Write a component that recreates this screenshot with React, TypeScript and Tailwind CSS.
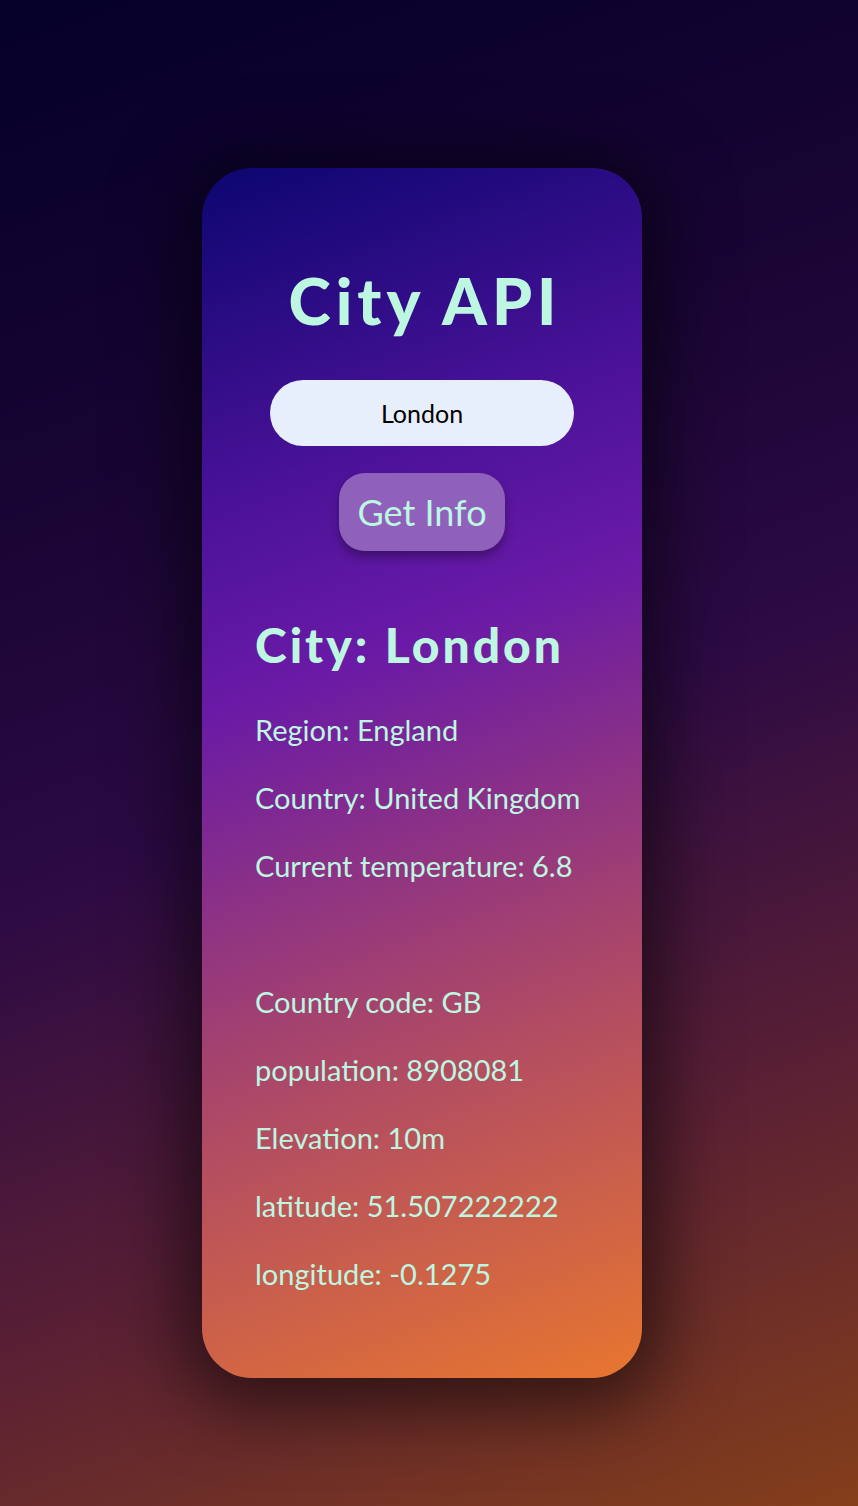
const rows = [
  "Region: England",
  "Country: United Kingdom",
  "Current temperature: 6.8",
  "",
  "Country code: GB",
  "population: 8908081",
  "Elevation: 10m",
  "latitude: 51.507222222",
  "longitude: -0.1275",
];

export default function App() {
  return (
    <div
      className="h-[1506px] w-full overflow-hidden bg-[linear-gradient(160deg,#04002a_0%,#1a0535_30%,#2c0a44_50%,#5a2034_75%,#843f1a_100%)] pt-[168px] pl-[202px]"
      style={{ fontFamily: "Lato, 'Open Sans', sans-serif" }}
    >
      <div className="flex h-[1210px] w-[440px] flex-col rounded-[50px] bg-[linear-gradient(160deg,#0c0670_0%,#4a1298_25%,#6a1aa6_40%,#a4426f_65%,#e8762f_100%)] shadow-[0_10px_70px_20px_rgba(0,0,0,0.55)]">
        <h1 className="mt-[93px] pl-[6px] text-center text-[64px] font-black leading-[80px] tracking-[5px] text-[#bdf7e1]">
          City API
        </h1>
        <div className="mt-[39px] flex justify-center">
          <input
            readOnly
            value="London"
            className="h-[66px] w-[304px] rounded-full bg-[#e8effc] text-center text-[25px] text-black outline-none"
          />
        </div>
        <div className="mt-[27px] flex justify-center">
          <button className="h-[78px] w-[166px] rounded-[26px] bg-[#9061bb] text-[36px] text-[#bdf7e1] shadow-[0_6px_10px_rgba(0,0,0,0.3)]">
            Get Info
          </button>
        </div>
        <div className="mt-[62px] pl-[53px] text-[#bdf7e1]">
          <h2 className="whitespace-nowrap text-[48px] font-black leading-[64px] tracking-[3px]">City: London</h2>
          <div className="mt-[31px] flex flex-col">
            {rows.map((r, i) => (
              <p key={i} className="h-[68px] whitespace-nowrap text-[29px] leading-[44px]">
                {r}
              </p>
            ))}
          </div>
        </div>
      </div>
    </div>
  );
}
